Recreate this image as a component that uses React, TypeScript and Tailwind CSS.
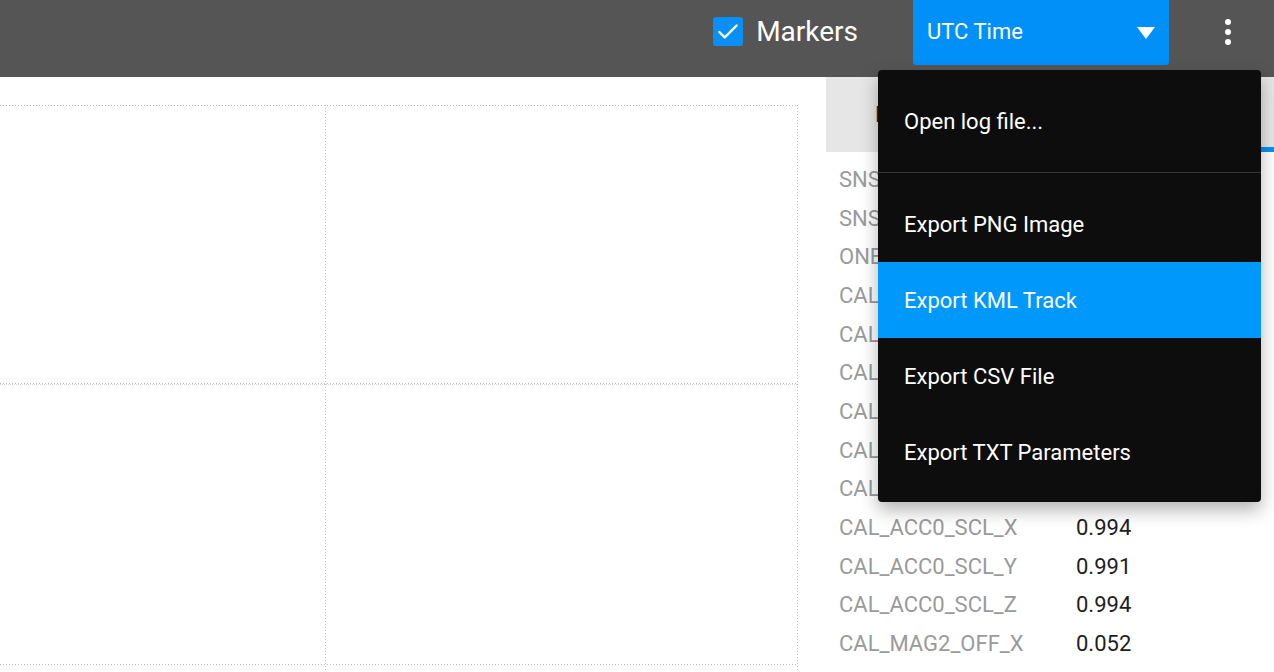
import { Check } from 'lucide-react'

const PARAMS: [string, string][] = [
  ['SNS_BOARD_ROT', '0'],
  ['SNS_DPRES_OFF', '0.000'],
  ['ONE_SHOT_EN', '0'],
  ['CAL_ACC0_ID', '1310988'],
  ['CAL_ACC0_XOFF', '0.021'],
  ['CAL_ACC0_YOFF', '-0.034'],
  ['CAL_ACC0_ZOFF', '0.118'],
  ['CAL_ACC0_PRIO', '50'],
  ['CAL_ACC0_ROT', '-1'],
  ['CAL_ACC0_SCL_X', '0.994'],
  ['CAL_ACC0_SCL_Y', '0.991'],
  ['CAL_ACC0_SCL_Z', '0.994'],
  ['CAL_MAG2_OFF_X', '0.052'],
]

const MENU = ['Export PNG Image', 'Export KML Track', 'Export CSV File', 'Export TXT Parameters']

function PlotGrid() {
  const grid = '#bfbfbf'
  return (
    <svg width="826" height="595" className="block">
      <g stroke={grid} strokeWidth="1" strokeDasharray="1 2" fill="none">
        <line x1="0" y1="28.5" x2="797" y2="28.5" />
        <line x1="0" y1="306.5" x2="797" y2="306.5" />
        <line x1="0" y1="307.5" x2="797" y2="307.5" strokeDasharray="1 1" stroke="#dadada" />
        <line x1="0" y1="587.5" x2="797" y2="587.5" />
        <line x1="325.5" y1="28" x2="325.5" y2="595" />
        <line x1="797.5" y1="28" x2="797.5" y2="595" />
      </g>
    </svg>
  )
}

export default function App() {
  return (
    <div className="relative w-[1274px] h-[672px] overflow-hidden bg-white font-['Roboto',sans-serif]">
      <header className="h-[77px] bg-[#555555] flex items-center pb-[14px] pr-[43px]">
        <div className="flex-1" />
        <label className="flex items-center gap-[13px]">
          <span className="w-[30px] h-[29px] rounded-[3px] bg-[#0a8ff5] flex items-center justify-center">
            <Check className="w-[26px] h-[26px] text-white" strokeWidth={2.2} />
          </span>
          <span className="text-[28px] text-white leading-none">Markers</span>
        </label>
        <div className="ml-[55px] self-start h-[65px] w-[256px] bg-[#0090f8] rounded-b-[3px] flex items-center pl-[14px] pr-[14px]">
          <span className="flex-1 text-[22px] text-white -mt-[2px]">UTC Time</span>
          <svg width="18" height="12" viewBox="0 0 18 12">
            <path d="M0 0 H18 L9 12 Z" fill="white" />
          </svg>
        </div>
        <div className="ml-[56px] flex flex-col gap-[4px]">
          <span className="w-[6px] h-[6px] rounded-full bg-white" />
          <span className="w-[6px] h-[6px] rounded-full bg-white" />
          <span className="w-[6px] h-[6px] rounded-full bg-white" />
        </div>
      </header>

      <div className="flex h-[595px]">
        <main className="w-[826px] shrink-0 overflow-hidden">
          <PlotGrid />
        </main>

        <aside className="w-[448px] shrink-0 flex flex-col">
          <div className="h-[75px] bg-[#e6e6e6] flex shrink-0">
            <div className="w-[224px] pl-[49px] flex items-center text-[22px] text-[#2a2a2a]">Details</div>
            <div className="w-[224px] flex items-center justify-center text-[22px] text-[#2a2a2a] border-b-[5px] border-[#0a8ff5]">
              Parameters
            </div>
          </div>
          <div className="pt-[8px] pl-[13px] flex flex-col">
            {PARAMS.map(([name, value]) => (
              <div key={name} className="h-[38.7px] flex items-center text-[22px]">
                <span className="w-[237px] text-[#9a9a9a]">{name}</span>
                <span className="text-[#1e1e1e]">{value}</span>
              </div>
            ))}
          </div>
        </aside>
      </div>

      <div className="absolute left-[878px] top-[70px] w-[383px] bg-[#0d0d0d] rounded-[4px] shadow-[0_8px_18px_rgba(0,0,0,0.3)] pt-[13px] pb-[12px]">
        <div className="h-[76px] pl-[26px] flex items-center text-[22px] text-white">Open log file...</div>
        <div className="my-[13px] h-px bg-[#363636]" />
        {MENU.map((item) => (
          <div
            key={item}
            className={
              item === 'Export KML Track'
                ? 'h-[76px] pl-[26px] flex items-center text-[22px] text-white bg-[#0099fb]'
                : 'h-[76px] pl-[26px] flex items-center text-[22px] text-white'
            }
          >
            {item}
          </div>
        ))}
      </div>
    </div>
  )
}
